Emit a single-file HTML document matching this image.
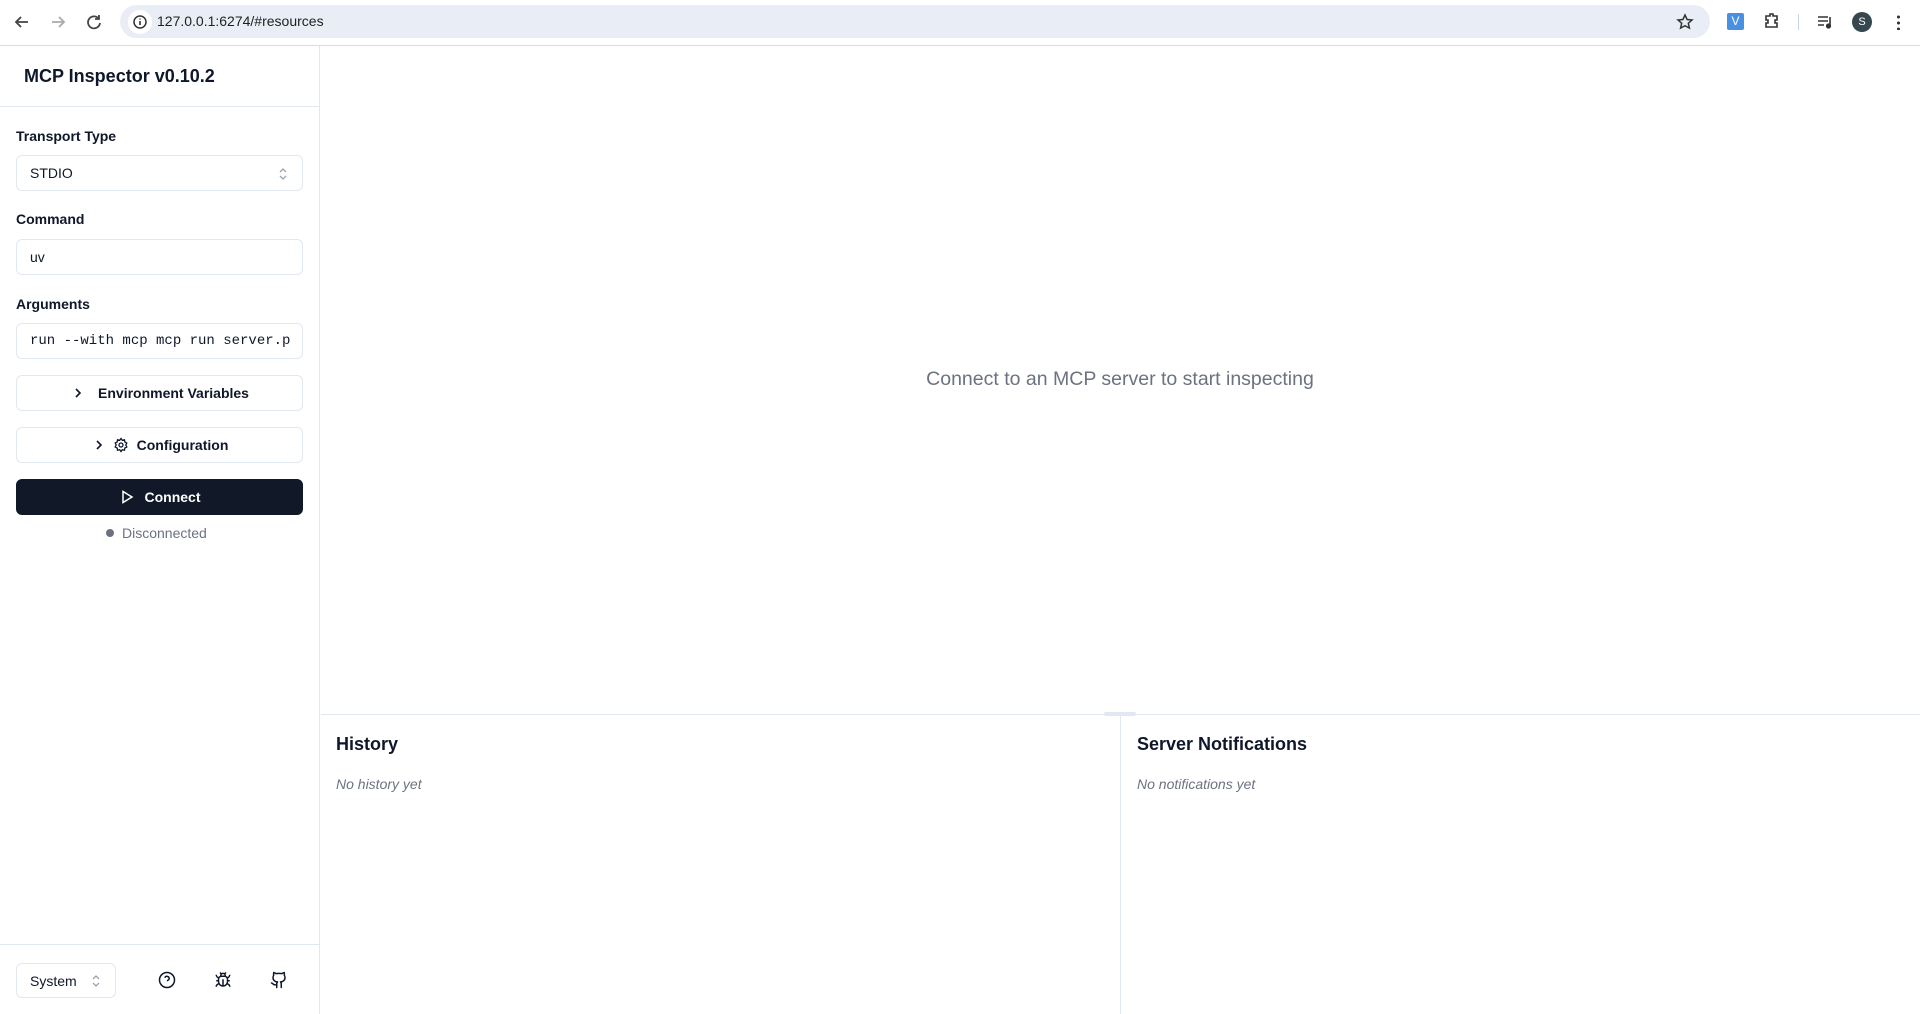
<!DOCTYPE html>
<html><head><meta charset="utf-8"><style>
*{box-sizing:border-box;margin:0;padding:0}
body{width:1920px;height:1014px;overflow:hidden;background:#fff;font-family:"Liberation Sans",sans-serif;color:#0f172a;position:relative}
.abs{position:absolute}
.chrome{left:0;top:0;width:1920px;height:46px;background:#fff;border-bottom:1px solid #dadce0}
.url{left:120px;top:5px;width:1590px;height:33px;background:#e9eef6;border-radius:17px}
.url .i{position:absolute;left:8px;top:5px;width:24px;height:24px;border-radius:12px;background:#fff}
.url span{position:absolute;left:37px;top:8px;font-size:14px;color:#1f1f1f}
.side{left:0;top:46px;width:320px;height:968px;border-right:1px solid #e2e8f0}
.lbl{left:16px;font-size:14px;font-weight:bold;color:#0f172a}
.box{left:16px;width:287px;height:36px;border:1px solid #e2e8f0;border-radius:6px;font-size:14px;color:#0f172a;padding-left:13px;line-height:34px}
.btn{text-align:center;padding-left:0;font-weight:bold}
.ic{display:inline-block;vertical-align:middle}
</style></head><body>
<div class="abs chrome">
<svg class="abs" style="left:12px;top:12px" width="20" height="20" viewBox="0 0 20 20" fill="none" stroke="#444" stroke-width="1.8"><path d="M16 10H4M9 5l-5 5 5 5"/></svg>
<svg class="abs" style="left:48px;top:12px" width="20" height="20" viewBox="0 0 20 20" fill="none" stroke="#aaa" stroke-width="1.8"><path d="M4 10h12M11 5l5 5-5 5"/></svg>
<svg class="abs" style="left:84px;top:12px" width="20" height="20" viewBox="0 0 20 20" fill="none" stroke="#444" stroke-width="1.8"><path d="M15 7a6 6 0 1 0 1 4M15 3v4h-4"/></svg>
<div class="abs url"><div class="i"><svg width="24" height="24" viewBox="0 0 24 24"><circle cx="12" cy="12" r="6" fill="none" stroke="#333" stroke-width="1.5"/><path d="M12 11v4M12 8.5v1" stroke="#333" stroke-width="1.6"/></svg></div><span>127.0.0.1:6274/#resources</span>
<svg class="abs" style="left:1556px;top:8px" width="18" height="18" viewBox="0 0 18 18" fill="none" stroke="#333" stroke-width="1.5"><path d="M9 2l2.1 4.5 4.9.5-3.7 3.3 1.1 4.8L9 12.7 4.6 15.1l1.1-4.8L2 7l4.9-.5z"/></svg></div>
<div class="abs" style="left:1727px;top:13px;width:17px;height:17px;background:#4a90e2;color:#fff;font-size:12px;text-align:center;line-height:17px;border-radius:2px">V</div>
<svg class="abs" style="left:1762px;top:11px" width="20" height="20" viewBox="0 0 20 20" fill="none" stroke="#333" stroke-width="1.6"><path d="M4 5h4V3h3v2h4v4h-2v3h2v4H4v-4h2V9H4z"/></svg>
<div class="abs" style="left:1798px;top:14px;width:1px;height:16px;background:#c8d4e6"></div>
<svg class="abs" style="left:1815px;top:12px" width="20" height="20" viewBox="0 0 20 20" fill="none" stroke="#333" stroke-width="1.6"><path d="M3 5h10M3 9h10M3 13h6M15 5v9"/><circle cx="13.5" cy="14" r="1.8" fill="#333"/></svg>
<div class="abs" style="left:1852px;top:12px;width:20px;height:20px;border-radius:10px;background:#37474f;color:#fff;font-size:11px;text-align:center;line-height:20px">S</div>
<div class="abs" style="left:1897px;top:14px;width:3px;height:16px;background:radial-gradient(circle,#333 1.4px,transparent 1.6px) 0 0/3px 6px"></div>
</div>
<div class="abs side">
<div class="abs" style="left:24px;top:20px;font-size:18px;font-weight:bold;color:#0f172a">MCP Inspector v0.10.2</div>
<div class="abs" style="left:0;top:60px;width:319px;border-top:1px solid #e2e8f0"></div>
<div class="abs" style="left:0;top:898px;width:319px;border-top:1px solid #e2e8f0"></div>
</div>
<div class="abs lbl" style="top:128px">Transport Type</div>
<div class="abs box" style="top:155px">STDIO<svg class="abs" style="right:14px;top:11px" width="10" height="14" viewBox="0 0 10 14" fill="none" stroke="#9ca3af" stroke-width="1.3"><path d="M2 5l3-3 3 3M2 9l3 3 3-3"/></svg></div>
<div class="abs lbl" style="top:211px">Command</div>
<div class="abs box" style="top:239px">uv</div>
<div class="abs lbl" style="top:296px">Arguments</div>
<div class="abs box" style="top:323px;font-family:'Liberation Mono',monospace;font-size:14px">run --with mcp mcp run server.p</div>
<div class="abs box btn" style="top:375px"><svg class="ic" width="16" height="16" viewBox="0 0 16 16" fill="none" stroke="#0f172a" stroke-width="1.6" style="margin-right:12px;margin-top:-3px"><path d="M6 4l4 4-4 4"/></svg>Environment Variables</div>
<div class="abs box btn" style="top:427px"><svg class="ic" width="16" height="16" viewBox="0 0 16 16" fill="none" stroke="#0f172a" stroke-width="1.6" style="margin-right:6px;margin-top:-3px"><path d="M6 4l4 4-4 4"/></svg><svg class="ic" width="16" height="16" viewBox="0 0 16 16" fill="none" stroke="#0f172a" stroke-width="1.3" style="margin-right:8px;margin-top:-3px"><circle cx="8" cy="8" r="2"/><path d="M8 1.5l1.3 1.8 2.2-.5.3 2.2 2 1-1 2 1 2-2 1-.3 2.2-2.2-.5L8 14.5l-1.3-1.8-2.2.5-.3-2.2-2-1 1-2-1-2 2-1 .3-2.2 2.2.5z"/></svg>Configuration</div>
<div class="abs box btn" style="top:479px;background:#111827;border-color:#111827;color:#fff"><svg class="ic" width="16" height="16" viewBox="0 0 16 16" fill="none" stroke="#fff" stroke-width="1.5" style="margin-right:10px;margin-top:-3px"><path d="M4 2.5v11l9-5.5z"/></svg>Connect</div>
<div class="abs" style="left:106px;top:529px;width:8px;height:8px;border-radius:4px;background:#6b7280"></div>
<div class="abs" style="left:122px;top:525px;font-size:14px;color:#6b7280">Disconnected</div>
<div class="abs box" style="top:963px;width:100px;height:35px">System<svg class="abs" style="right:14px;top:10px" width="10" height="14" viewBox="0 0 10 14" fill="none" stroke="#9ca3af" stroke-width="1.3"><path d="M2 5l3-3 3 3M2 9l3 3 3-3"/></svg></div>
<svg class="abs" style="left:158px;top:971px" width="18" height="18" viewBox="0 0 24 24" fill="none" stroke="#0f172a" stroke-width="2"><circle cx="12" cy="12" r="10"/><path d="M9.1 9a3 3 0 0 1 5.8 1c0 2-3 3-3 3M12 17h.01"/></svg>
<svg class="abs" style="left:214px;top:971px" width="18" height="18" viewBox="0 0 24 24" fill="none" stroke="#0f172a" stroke-width="2"><path d="M8 2l1.9 1.9M16 2l-1.9 1.9M9 7.1v-1a3 3 0 0 1 6 0v1M12 20c-3.3 0-6-2.7-6-6v-3a4 4 0 0 1 4-4h4a4 4 0 0 1 4 4v3c0 3.3-2.7 6-6 6zM12 20v-9M6.5 13H3M21 13h-3.5M3 21c0-2.1 1.7-3.9 3.8-4M20.97 5c0 2.1-1.6 3.8-3.5 4M3 5c0 2.1 1.6 3.8 3.5 4M21 21c0-2.1-1.7-3.9-3.8-4"/></svg>
<svg class="abs" style="left:270px;top:971px" width="18" height="18" viewBox="0 0 24 24" fill="none" stroke="#0f172a" stroke-width="2" stroke-linecap="round" stroke-linejoin="round"><path d="M15 22v-4a4.8 4.8 0 0 0-1-3.5c3 0 6-2 6-5.5.08-1.25-.27-2.48-1-3.5.28-1.15.28-2.35 0-3.5 0 0-1 0-3 1.5-2.64-.5-5.36-.5-8 0C6 2 5 2 5 2c-.3 1.15-.3 2.35 0 3.5A5.4 5.4 0 0 0 4 9c0 3.5 3 5.5 6 5.5-.39.49-.68 1.05-.85 1.65-.17.6-.22 1.23-.15 1.85v4"/><path d="M9 18c-4.51 2-5-2-7-2"/></svg>
<div class="abs" style="left:320px;top:368px;width:1600px;text-align:center;font-size:19.5px;color:#6b7280">Connect to an MCP server to start inspecting</div>
<div class="abs" style="left:321px;top:714px;width:1599px;border-top:1px solid #e2e8f0"></div>
<div class="abs" style="left:1104px;top:712px;width:32px;height:4px;border-radius:2px;background:#e2e8f0"></div>
<div class="abs" style="left:1120px;top:715px;width:1px;height:299px;background:#e2e8f0"></div>
<div class="abs" style="left:336px;top:734px;font-size:18px;font-weight:bold">History</div>
<div class="abs" style="left:336px;top:776px;font-size:14px;font-style:italic;color:#6b7280">No history yet</div>
<div class="abs" style="left:1137px;top:734px;font-size:18px;font-weight:bold">Server Notifications</div>
<div class="abs" style="left:1137px;top:776px;font-size:14px;font-style:italic;color:#6b7280">No notifications yet</div>
</body></html>
